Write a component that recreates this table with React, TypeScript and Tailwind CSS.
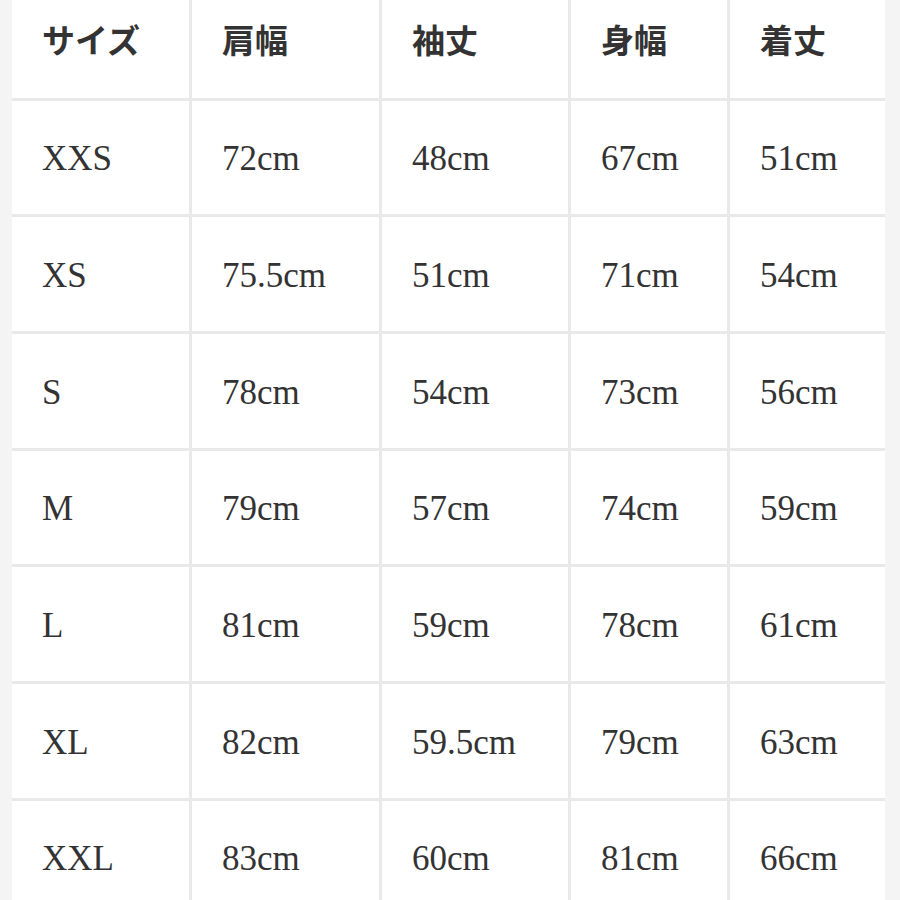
const headers = ["サイズ", "肩幅", "袖丈", "身幅", "着丈"]

const rows = [
  ["XXS", "72cm", "48cm", "67cm", "51cm"],
  ["XS", "75.5cm", "51cm", "71cm", "54cm"],
  ["S", "78cm", "54cm", "73cm", "56cm"],
  ["M", "79cm", "57cm", "74cm", "59cm"],
  ["L", "81cm", "59cm", "78cm", "61cm"],
  ["XL", "82cm", "59.5cm", "79cm", "63cm"],
  ["XXL", "83cm", "60cm", "81cm", "66cm"],
]

export default function App() {
  return (
    <div className="h-[900px] w-[900px] overflow-hidden bg-[#f4f4f4] pl-[12px]">
      <div className="-mt-[16px] grid w-[873px] grid-cols-[177px_187px_186px_156px_155px] auto-rows-[113.7px] gap-[3px] bg-[#e9e9e9]">
        {headers.map((h) => (
          <div
            key={h}
            className="flex items-center bg-white pb-[2px] pl-[30px] text-[33px] font-semibold text-[#333] [font-family:'Noto_Sans_CJK_JP',sans-serif]"
          >
            {h}
          </div>
        ))}
        {rows.map((row) =>
          row.map((cell, i) => (
            <div
              key={row[0] + i}
              className="flex items-center bg-white pl-[30px] pt-[4px] text-[35px] text-[#333] [font-family:'Liberation_Serif',serif]"
            >
              {cell}
            </div>
          ))
        )}
      </div>
    </div>
  )
}
